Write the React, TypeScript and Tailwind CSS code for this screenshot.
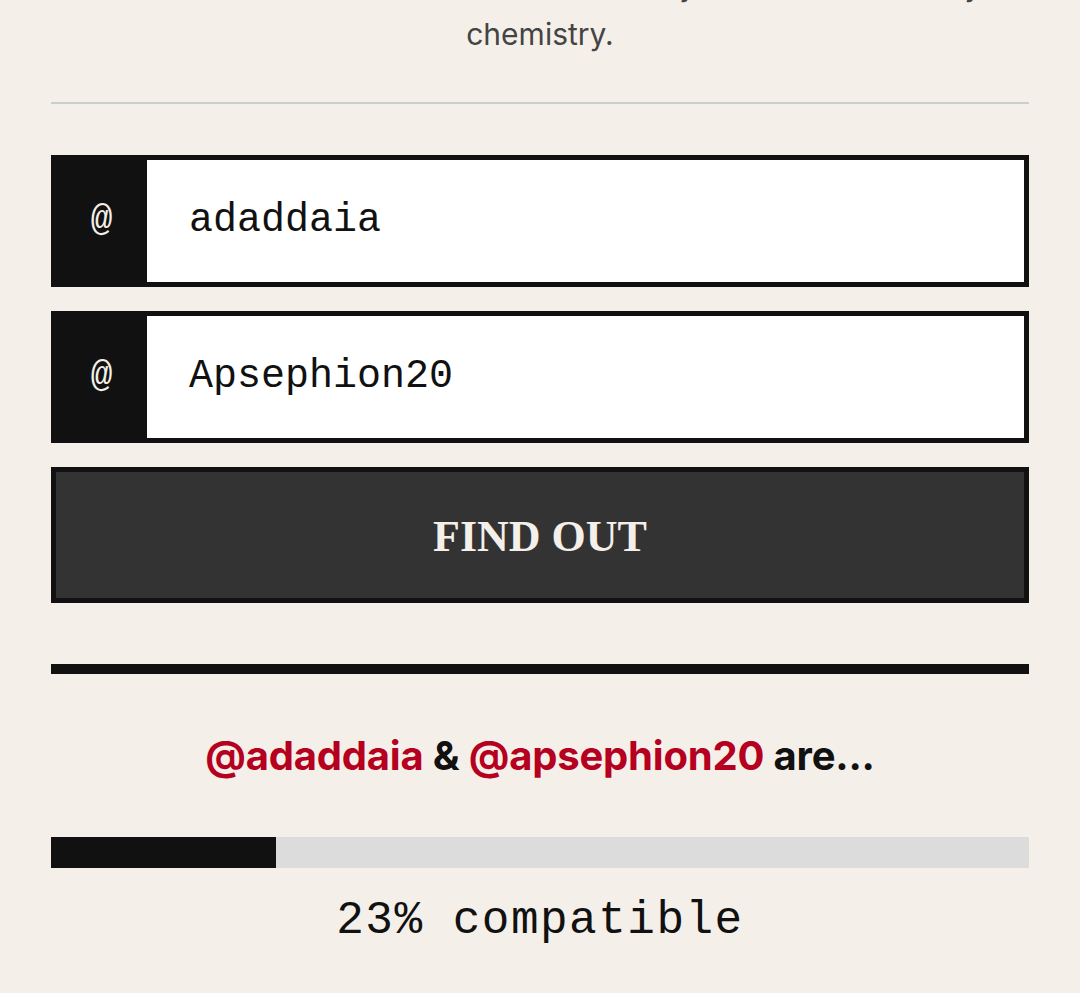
import React from "react";

const mono = { fontFamily: '"Liberation Mono", "DejaVu Sans Mono", monospace' };

function HandleInput({ value }: { value: string }) {
  return (
    <div className="flex h-[132px] border-[5px] border-[#111111] bg-white">
      <div
        className="flex w-[91px] items-center justify-center bg-[#111111] text-[36px] text-[#f4efe8]"
        style={mono}
      >
        @
      </div>
      <div className="flex flex-1 items-center pl-[42px] text-[40px] text-[#111111]" style={mono}>
        {value}
      </div>
    </div>
  );
}

export default function App() {
  return (
    <div className="min-h-[993px] w-full overflow-hidden bg-[#f4f0e9]">
      <div className="px-[51px]">
        <div
          className="mt-[-37px] text-center text-[30px] leading-[44px] text-[#444444]"
          style={{ fontFamily: 'Inter, "Noto Sans", sans-serif' }}
        >
          <p className="mb-[5px] whitespace-nowrap">Enter two handles below to find out if they share true harmony</p>
          <p>chemistry.</p>
        </div>
        <div className="mt-[46px] h-[2px] bg-[#cbcfc9]" />
        <div className="mt-[51px] flex flex-col gap-[24px]">
          <HandleInput value="adaddaia" />
          <HandleInput value="Apsephion20" />
          <button
            className="flex h-[136px] items-center justify-center border-[5px] border-[#111111] bg-[#333333] pt-[4px] text-[44px] font-bold text-[#f4efe8]"
            style={{ fontFamily: '"Liberation Serif", "DejaVu Serif", serif' }}
          >
            FIND OUT
          </button>
        </div>
        <div className="mt-[61px] h-[10px] bg-[#111111]" />
        <p
          className="mt-[58px] text-center text-[40px] font-bold leading-[48px] tracking-[-0.2px] text-[#111111]"
          style={{ fontFamily: 'Inter, "Noto Sans", sans-serif' }}
        >
          <span className="text-[#b5001f]">@adaddaia</span> &amp;{" "}
          <span className="text-[#b5001f]">@apsephion20</span> are...
        </p>
        <div className="mt-[57px] flex h-[31px] bg-[#dcdcdc]">
          <div className="h-full bg-[#111111]" style={{ width: "23%" }} />
        </div>
        <p
          className="mt-[25px] text-center text-[46px] leading-[56px] tracking-[1.5px] text-[#111111]"
          style={mono}
        >
          23% compatible
        </p>
      </div>
    </div>
  );
}
